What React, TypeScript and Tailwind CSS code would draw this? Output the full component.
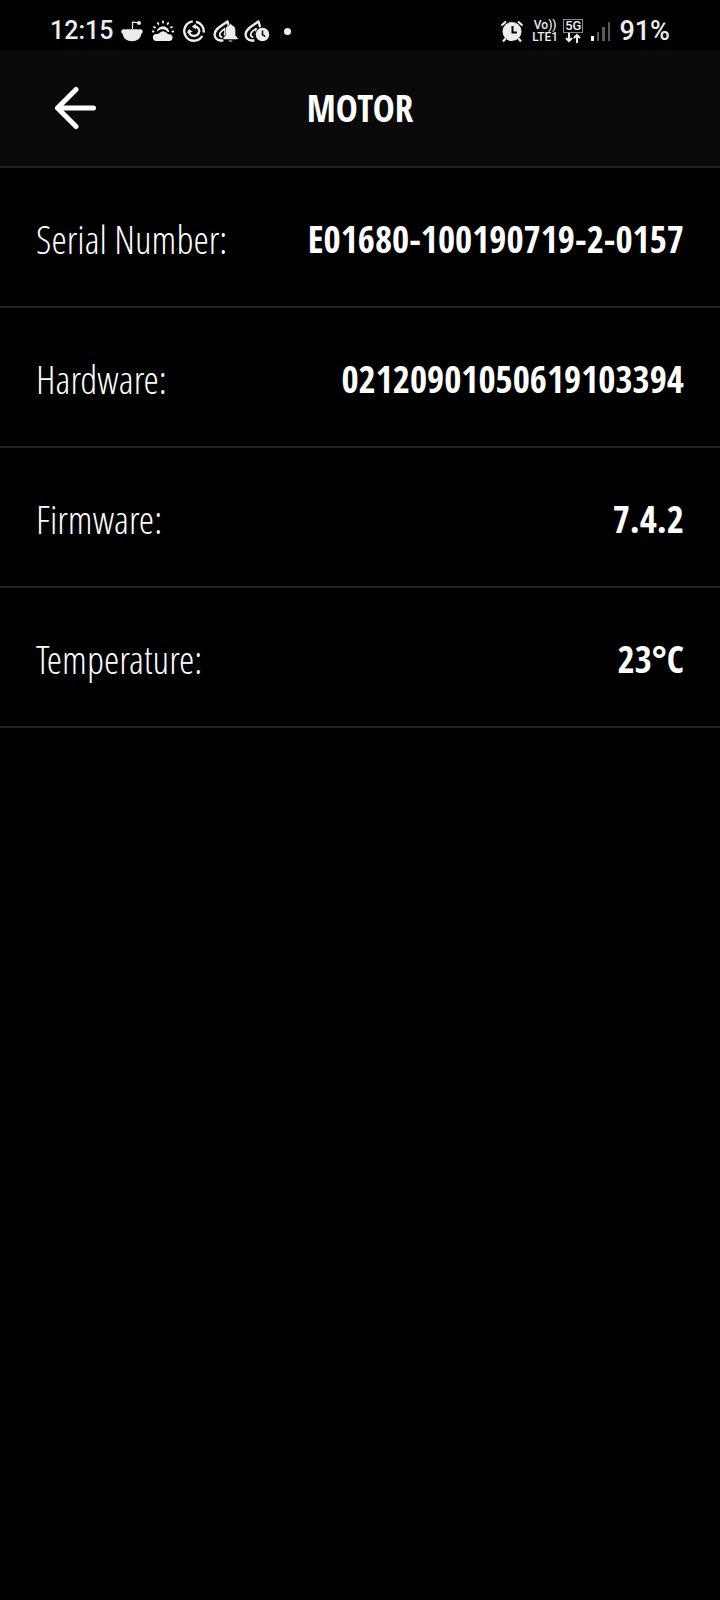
import React from 'react';

const details = [
  { label: 'Serial Number:', value: 'E01680-100190719-2-0157' },
  { label: 'Hardware:', value: '02120901050619103394' },
  { label: 'Firmware:', value: '7.4.2' },
  { label: 'Temperature:', value: '23°C' },
];

const BowlIcon = () => (
  <svg viewBox="0 0 24 24" className="h-6 w-6" fill="currentColor">
    <path d="M1.500 11.500c.8-1.200 2.500-1.500 3.700-.9C7.300 10 9.500 10.200 12 10.200s4.700-.2 6.800.4c1.200-.6 2.900-.3 3.700.9.600 1.400 0 2.700-1.200 3.300-.6 4.600-4.100 7.500-9.300 7.500s-8.700-2.900-9.300-7.500C1.500 14.200.900 12.900 1.500 11.500z" />
    <path d="M12.500 10V3.200l5 .4" fill="none" stroke="currentColor" strokeWidth="1.200" />
    <circle cx="19" cy="4" r="2" />
  </svg>
);

const WeatherIcon = () => (
  <svg viewBox="0 0 24 24" className="h-6 w-6" fill="currentColor">
    <path d="M5 22a3.500 3.500 0 0 1-.4-6.900c1.800.1 2.800-.2 3.800-1.200a5.400 5.400 0 0 1 8.600 1.400c.6-.2 1.300-.2 2-.1A3.500 3.500 0 0 1 19 22z" />
    <path d="M5.800 12.700a6.300 6.300 0 0 1 12.500.2l-1.500.2a6.800 6.800 0 0 0-9.300-1.700c-.6.400-1.100.900-1.700 1.300z" />
    <path
      d="M12 2.500v1.200M6.800 4l.6 1M17.200 4l-.6 1M3 8l1 .600M21 8l-1 .600M1.800 12.500h.8M22.200 12.500h-.8"
      stroke="currentColor"
      strokeWidth="1.800"
      strokeLinecap="round"
    />
  </svg>
);

const SwirlIcon = () => (
  <svg viewBox="0 0 24 24" className="h-6 w-6" fill="none" stroke="currentColor" strokeWidth="2.400">
    <path d="M14 2.700a9.600 9.600 0 0 1 7.600 10.800M20.300 17A9.700 9.700 0 1 1 10.800 2.400" />
    <path d="M12.500 7.500c3 .2 4.900 2.200 4.700 4.700a5.200 5.200 0 0 1-10.200.8" />
    <path d="M4.800 13.800l2.300-3.800 3.900 3z" fill="currentColor" strokeWidth="0" />
    <path d="M13.800 4.800v5.400L9.800 7.500z" fill="currentColor" strokeWidth="0" />
  </svg>
);

const Drop = () => (
  <g fill="none" stroke="currentColor" strokeLinejoin="round">
    <path d="M16.500 9.500L14.500 2.500C9.500 6.500 1.600 9.600 1.600 15.300c0 3.800 2.600 6 5.800 6.200h3" strokeWidth="2.400" />
    <path d="M11.500 16.500c.5-3.500 1-5.500.5-6.800-3.200 2-5.300 3.300-5.300 5.700 0 1.600 1 2.600 2.600 2.800" strokeWidth="1.800" />
  </g>
);

const DropBellIcon = () => (
  <svg viewBox="0 0 24 24" className="h-6 w-6 overflow-visible">
    <Drop />
    <path
      d="M17.500 4.800c.8 0 1.300.5 1.400 1.300 2.500.7 3.700 2.600 3.700 5.400v4.700l2.400 3v1.300H10v-1.300l2.400-3v-4.700c0-2.800 1.200-4.700 3.700-5.400.1-.8.6-1.300 1.400-1.300zM15.300 21.300h4.400a2.200 1.600 0 0 1-4.400 0z"
      fill="currentColor"
      stroke="#000"
      strokeWidth=".500"
    />
  </svg>
);

const DropClockIcon = () => (
  <svg viewBox="0 0 24 24" className="h-6 w-6 overflow-visible">
    <Drop />
    <circle cx="18.500" cy="15.500" r="7.200" fill="currentColor" stroke="#000" />
    <path d="M18.500 11.500v4.300l2.700 1.600" fill="none" stroke="#000" strokeWidth="1.500" />
  </svg>
);

const AlarmIcon = () => (
  <svg viewBox="0 0 24 24" className="h-6 w-6">
    <circle cx="12" cy="12.500" r="9.500" fill="currentColor" />
    <path d="M1.500 6.500L6 2.500M22.500 6.500L18 2.500M5.500 19.500L3 22.500M18.500 19.500l2.500 3" stroke="currentColor" strokeWidth="2.200" fill="none" />
    <path d="M12.500 7v6.500H17" stroke="#000" strokeWidth="2" fill="none" />
  </svg>
);

const SignalIcon = () => (
  <svg viewBox="0 0 20 22" className="h-[22px] w-5" fill="#5a5a5a">
    <rect x="0" y="16" width="3" height="5" fill="#fff" />
    <rect x="6" y="12" width="2" height="9" />
    <rect x="11" y="7" width="3" height="14" />
    <rect x="17" y="2" width="2" height="19" />
  </svg>
);

const StatusBar = () => (
  <div className="flex h-[50px] items-center justify-between px-[50px] pt-3 font-['Roboto',sans-serif] text-[#ededed]">
    <div className="flex items-center gap-[7px]">
      <span className="text-[25px] leading-6 font-medium">12:15</span>
      <BowlIcon />
      <WeatherIcon />
      <SwirlIcon />
      <DropBellIcon />
      <DropClockIcon />
      <span className="flex w-6 justify-center">
        <span className="h-[7px] w-[7px] rounded-full bg-current" />
      </span>
    </div>
    <div className="flex items-center gap-2">
      <AlarmIcon />
      <div className="flex items-center gap-[5px]">
        <div className="flex flex-col items-center text-[12px] leading-3 font-medium">
          <span>Vo))</span>
          <span>LTE1</span>
        </div>
        <div className="flex flex-col items-center">
          <span className="border border-[#8a8a8a] px-px text-[13px] leading-3 font-medium">5G</span>
          <svg viewBox="0 0 16 10" className="h-[10px] w-4" fill="none" stroke="currentColor" strokeWidth="2">
            <path d="M4 0v8M1 5l3 3 3-3M12 10V2M9 5l3-3 3 3" />
          </svg>
        </div>
      </div>
      <SignalIcon />
      <span className="text-[27px] leading-6 font-medium">91%</span>
    </div>
  </div>
);

export default function App() {
  return (
    <main className="min-h-screen bg-black font-['Open_Sans_Condensed','Roboto_Condensed',sans-serif] text-white">
      <StatusBar />

      <header className="grid h-[118px] grid-cols-[1fr_auto_1fr] items-center border-b-2 border-[#222] bg-[#0a0a0a] px-[54px]">
        <button type="button" aria-label="Back" className="justify-self-start">
          <svg viewBox="0 0 42 44" className="h-11 w-[42px]" fill="none" stroke="currentColor" strokeWidth="5" strokeLinecap="round" strokeLinejoin="round">
            <path d="M22 3.500L3.500 22 22 40.500M3.500 22h36" />
          </svg>
        </button>
        <h1 className="text-[37px] leading-10 font-bold">MOTOR</h1>
      </header>

      <dl>
        {details.map(({ label, value }) => (
          <div key={label} className="flex h-[140px] items-center justify-between border-b-2 border-[#202020] px-9 pt-1">
            <dt className="font-['Open_Sans_Condensed_Light','Roboto_Condensed',sans-serif] text-[39px] leading-10 font-light">{label}</dt>
            <dd className="text-[37px] leading-10 font-bold">{value}</dd>
          </div>
        ))}
      </dl>
    </main>
  );
}
